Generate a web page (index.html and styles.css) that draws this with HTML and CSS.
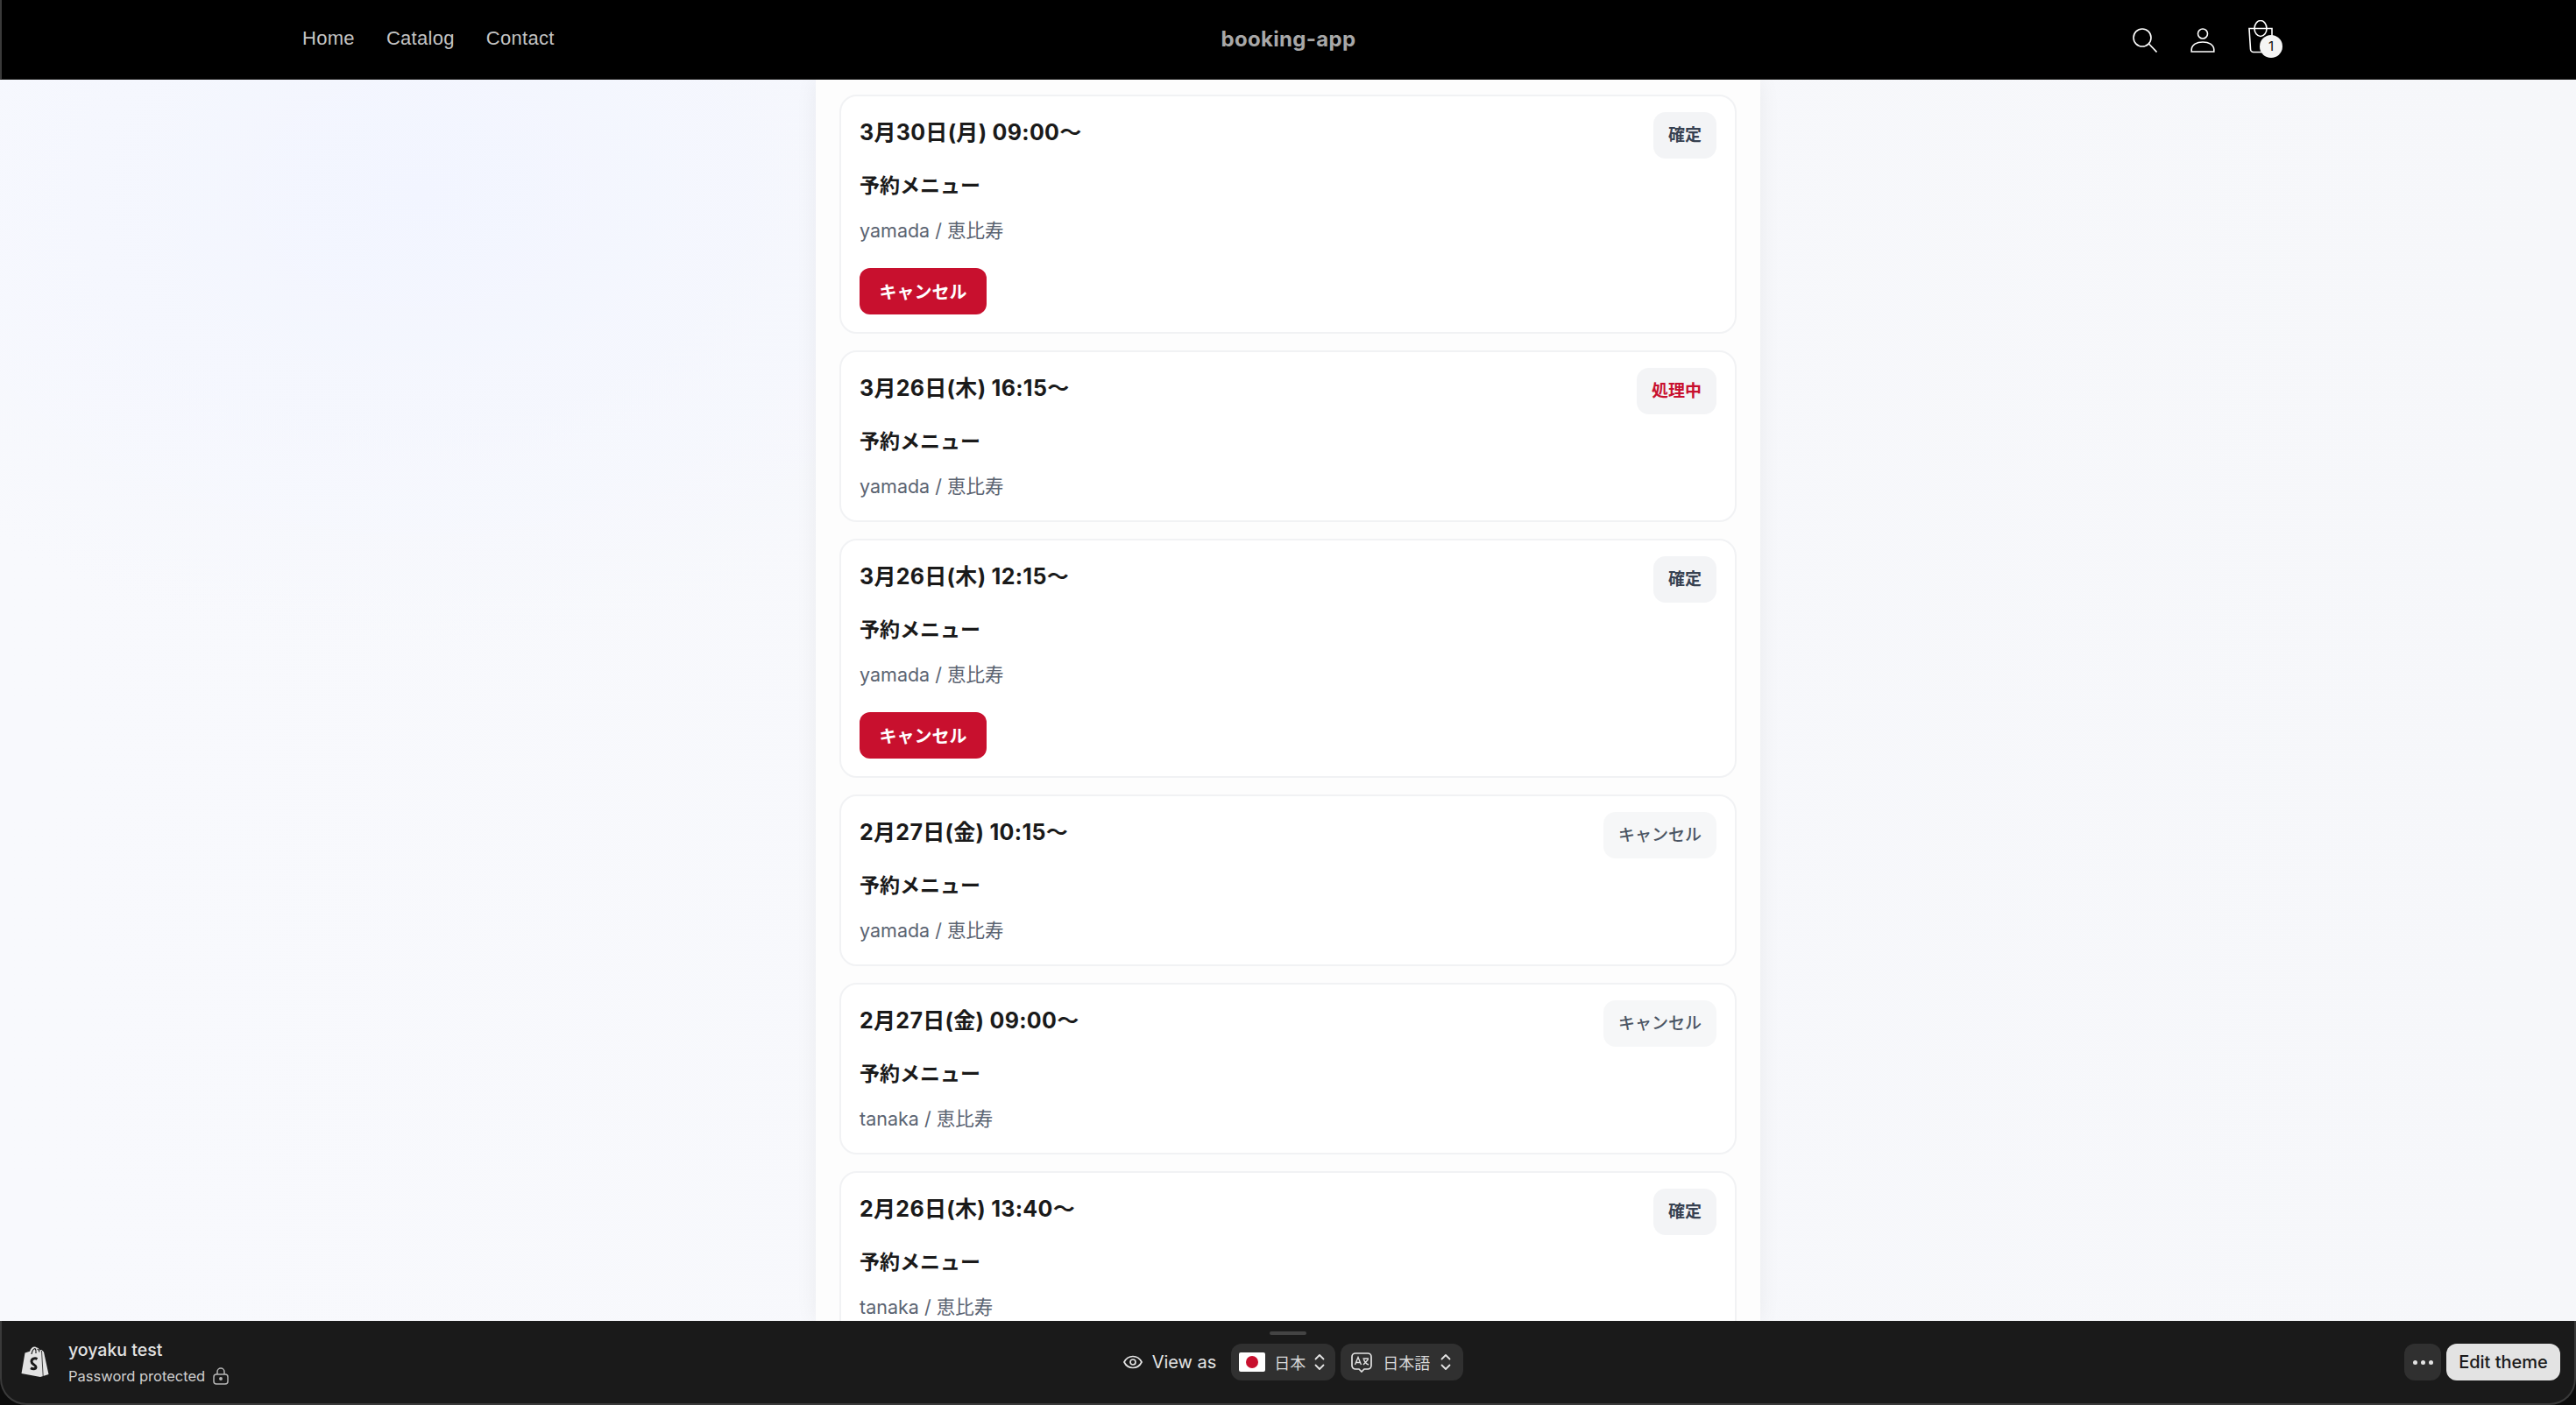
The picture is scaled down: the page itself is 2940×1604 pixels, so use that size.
FILE: index.html
```html
<!DOCTYPE html>
<html lang="ja">
<head>
    <meta charset="UTF-8">
    <meta name="viewport" content="width=device-width, initial-scale=1.0">
    <title>booking-app</title>
    <link rel="stylesheet" href="styles.css">
</head>
<body>
    <header class="site-header">
        <nav class="site-nav">
            <a class="nav-link">Home</a>
            <a class="nav-link">Catalog</a>
            <a class="nav-link">Contact</a>
        </nav>
        <div class="site-name">booking-app</div>
        <div class="header-icons">
            <svg class="icon-search" viewBox="0 0 28 28" fill="none" stroke="#fff" stroke-width="1.6"><circle cx="11" cy="11" r="10"/><path d="M18.5 18l9 9.5"/></svg>
            <svg class="icon-user" viewBox="0 0 28 28" fill="none" stroke="#fff" stroke-width="1.6"><circle cx="14" cy="6.5" r="5.5"/><path d="M1.2 27v-2.5C1.6 19 7 16 14 16s12.400 3 12.800 8.500V27z"/></svg>
            <div class="cart">
                <svg class="icon-cart" viewBox="0 0 28 38" fill="none" stroke="#fff" stroke-width="1.6"><ellipse cx="14" cy="9.500" rx="7" ry="9"/><path d="M1 9.500h26v23.500a3.500 3.500 0 0 1-3.500 3.500H6a3.500 3.500 0 0 1-3.500-3.500z"/></svg>
                <span class="cart-count">1</span>
            </div>
        </div>
    </header>

    <main class="page-body">
        <section class="booking-list">
            <article class="booking-card">
                <div class="card-top">
                    <h2 class="booking-date">3月30日(月) 09:00〜</h2>
                    <span class="status">確定</span>
                </div>
                <p class="booking-menu">予約メニュー</p>
                <p class="booking-staff">yamada / 恵比寿</p>
                <button class="cancel-button">キャンセル</button>
            </article>
            <article class="booking-card">
                <div class="card-top">
                    <h2 class="booking-date">3月26日(木) 16:15〜</h2>
                    <span class="status status-pending">処理中</span>
                </div>
                <p class="booking-menu">予約メニュー</p>
                <p class="booking-staff">yamada / 恵比寿</p>
            </article>
            <article class="booking-card">
                <div class="card-top">
                    <h2 class="booking-date">3月26日(木) 12:15〜</h2>
                    <span class="status">確定</span>
                </div>
                <p class="booking-menu">予約メニュー</p>
                <p class="booking-staff">yamada / 恵比寿</p>
                <button class="cancel-button">キャンセル</button>
            </article>
            <article class="booking-card">
                <div class="card-top">
                    <h2 class="booking-date">2月27日(金) 10:15〜</h2>
                    <span class="status status-cancelled">キャンセル</span>
                </div>
                <p class="booking-menu">予約メニュー</p>
                <p class="booking-staff">yamada / 恵比寿</p>
            </article>
            <article class="booking-card">
                <div class="card-top">
                    <h2 class="booking-date">2月27日(金) 09:00〜</h2>
                    <span class="status status-cancelled">キャンセル</span>
                </div>
                <p class="booking-menu">予約メニュー</p>
                <p class="booking-staff">tanaka / 恵比寿</p>
            </article>
            <article class="booking-card">
                <div class="card-top">
                    <h2 class="booking-date">2月26日(木) 13:40〜</h2>
                    <span class="status">確定</span>
                </div>
                <p class="booking-menu">予約メニュー</p>
                <p class="booking-staff">tanaka / 恵比寿</p>
            </article>
        </section>
    </main>

    <footer class="preview-wrap">
        <div class="preview-bar">
            <span class="drag-handle"></span>
            <div class="store-info">
                <svg class="shop-logo" viewBox="0 0 32 36"><path d="M4.500 7.500L10 5.800C11 2.500 13 .5 15.500.5c1 0 1.800.4 2.400 1.100 1.800.1 2.800 1.500 3.300 3l2.300-.5L26 6.500l5.500 25.500L22 35 .5 31z" fill="#e3e3e3"/><path d="M12 9c.6-3.500 2-6 4-6.500M17 8c.4-2.500 0-4.500-1-5.500M21 6.500c-.2-1.500-.8-3-2.500-3.500" fill="none" stroke="#1a1a1a" stroke-width="1.200"/><path d="M23.500 5l1.700 29" stroke="#1a1a1a" stroke-width=".8"/><path d="M18.500 14.500c-3-1.500-6.500-.2-6.500 3 0 3.500 5 3.500 5 6.300 0 2.400-3.500 2.500-6 1" fill="none" stroke="#1a1a1a" stroke-width="3"/></svg>
                <div class="store-text">
                    <div class="store-name">yoyaku test</div>
                    <div class="store-status">Password protected
                        <svg class="icon-lock" viewBox="0 0 18 20" fill="none" stroke="#b5b5b5" stroke-width="1.500"><path d="M5 8V5a4 4 0 0 1 8 0v3"/><rect x="1" y="8" width="16" height="11" rx="3"/><circle cx="9" cy="13" r="1.200" fill="#b5b5b5"/></svg>
                    </div>
                </div>
            </div>
            <div class="view-as">
                <svg class="icon-eye" viewBox="0 0 22 16" fill="none" stroke="#e3e3e3" stroke-width="1.700"><path d="M1 8c2-4 5.500-6.500 10-6.500S19 4 21 8c-2 4-5.500 6.500-10 6.500S3 12 1 8z"/><circle cx="11" cy="8" r="3"/></svg>
                <span class="view-label">View as</span>
                <div class="picker">
                    <span class="flag"><span class="flag-sun"></span></span>
                    <span class="picker-text">日本</span>
                    <svg class="icon-chevrons" viewBox="0 0 12 20" fill="none" stroke="#e3e3e3" stroke-width="1.800" stroke-linecap="round" stroke-linejoin="round"><path d="M1.500 6.500L6 2l4.500 4.500M1.500 13.500L6 18l4.500-4.500"/></svg>
                </div>
                <div class="picker picker-lang">
                    <svg class="icon-translate" viewBox="0 0 24 24" fill="none" stroke="#e3e3e3" stroke-width="1.700"><path d="M5 2h14a4 4 0 0 1 4 4v10a4 4 0 0 1-4 4h-4l-3 3-3-3H5a4 4 0 0 1-4-4V6a4 4 0 0 1 4-4z"/><path d="M4.500 15L8 6.500l3.500 8.500M5.700 12.500h4.600M13.500 8h6.500M14 15l5.500-6M14.500 9c.8 2.500 2.800 5 5.500 6" stroke-width="1.400"/></svg>
                    <span class="picker-text">日本語</span>
                    <svg class="icon-chevrons" viewBox="0 0 12 20" fill="none" stroke="#e3e3e3" stroke-width="1.800" stroke-linecap="round" stroke-linejoin="round"><path d="M1.500 6.500L6 2l4.500 4.500M1.500 13.500L6 18l4.500-4.500"/></svg>
                </div>
            </div>
            <div class="bar-actions">
                <button class="more-button"><span class="dot"></span><span class="dot"></span><span class="dot"></span></button>
                <button class="edit-button">Edit theme</button>
            </div>
        </div>
    </footer>
</body>
</html>
```

FILE: styles.css
```css
* {
    box-sizing: border-box;
}

html, body {
    margin: 0;
    height: 100%;
}

body {
    display: flex;
    flex-direction: column;
    height: 1604px;
    overflow: hidden;
    font-family: Inter, "Noto Sans CJK JP", sans-serif;
    background-color: #f7f8fb;
    background-image:
        radial-gradient(ellipse 760px 520px at 480px 220px, #f2f5ff 0%, rgba(242, 245, 255, 0) 100%),
        linear-gradient(90deg, #f8f9fd 0%, #f6f7fa 100%);
}

.site-header {
    flex: 0 0 91px;
    display: grid;
    grid-template-columns: 1fr auto 1fr;
    align-items: center;
    padding: 0 344px 2px 343px;
    background-color: #000;
    border-left: 2px solid #3a3a3a;
    border-bottom: 1px solid #222;
}

.site-nav {
    display: flex;
    gap: 36px;
}

.nav-link {
    font-family: "Liberation Sans", Arial, sans-serif;
    font-size: 22px;
    letter-spacing: 0.3px;
    color: #c4c4c4;
}

.site-name {
    font-family: Inter, sans-serif;
    font-size: 24px;
    font-weight: 700;
    letter-spacing: 0.3px;
    color: #a8a8a8;
}

.header-icons {
    display: flex;
    justify-content: flex-end;
    align-items: flex-end;
    gap: 38px;
    height: 38px;
    margin-bottom: 5px;
    padding-right: 2px;
}

.icon-search,
.icon-user {
    width: 28px;
    height: 28px;
    margin-bottom: 1px;
}

.cart {
    position: relative;
    width: 28px;
    height: 38px;
}

.icon-cart {
    display: block;
    width: 28px;
    height: 38px;
}

.cart-count {
    position: absolute;
    left: 13px;
    top: 17px;
    width: 26px;
    height: 26px;
    border-radius: 50%;
    background-color: #f5f5f5;
    color: #111;
    font-size: 15px;
    line-height: 26px;
    text-align: center;
}

.page-body {
    flex: 1;
    min-height: 0;
    overflow: hidden;
}

.booking-list {
    display: flex;
    flex-direction: column;
    gap: 19px;
    width: 1078px;
    height: 100%;
    margin: 0 auto;
    padding: 17px 27px 0;
    background-color: #fdfdfd;
    box-shadow: 0 0 24px rgba(0, 0, 0, 0.06);
}

.booking-card {
    flex: none;
    padding: 18px 21px 20px;
    background-color: #fff;
    border: 2px solid #f1f2f4;
    border-radius: 20px;
}

.card-top {
    display: flex;
    justify-content: space-between;
    align-items: flex-start;
    height: 53px;
}

.booking-date {
    margin: 0;
    font-size: 25px;
    font-weight: 700;
    letter-spacing: 0.3px;
    line-height: 47px;
    color: #1a1a1a;
}

.status {
    height: 53px;
    padding: 0 17px;
    border-radius: 14px;
    background-color: #f3f4f6;
    color: #374151;
    font-size: 19px;
    font-weight: 700;
    line-height: 54px;
}

.status-pending {
    color: #c8102e;
}

.status-cancelled {
    font-weight: 500;
    color: #4b5563;
    background-color: #f6f7f8;
}

.booking-menu {
    margin: 14px 0 0;
    font-size: 23px;
    font-weight: 700;
    line-height: 34px;
    color: #1a1a1a;
}

.booking-staff {
    margin: 15px 0 0;
    font-size: 21.5px;
    line-height: 38px;
    color: #5b6472;
}

.cancel-button {
    display: block;
    width: 145px;
    height: 53px;
    margin-top: 24px;
    border: none;
    border-radius: 12px;
    background-color: #c8102e;
    color: #fff;
    font-family: inherit;
    font-size: 20px;
    font-weight: 700;
}

.preview-wrap {
    flex: 0 0 96px;
    background-color: #0c0c0c;
}

.preview-bar {
    position: relative;
    display: grid;
    grid-template-columns: 1fr auto 1fr;
    align-items: center;
    height: 100%;
    padding: 0 16px 0 28px;
    background-color: #1a1a1a;
    border: 2px solid #3a3a3a;
    border-top: none;
    border-radius: 0 0 30px 30px;
}

.drag-handle {
    position: absolute;
    left: 1447px;
    top: 12px;
    width: 42px;
    height: 4px;
    border-radius: 2px;
    background-color: #444;
}

.store-info {
    display: flex;
    align-items: center;
    gap: 22px;
    margin-left: -6px;
}

.shop-logo {
    width: 32px;
    height: 36px;
}

.store-name {
    font-size: 19.5px;
    font-weight: 500;
    line-height: 28px;
    color: #e3e3e3;
}

.store-status {
    display: flex;
    align-items: center;
    gap: 9px;
    margin-top: 4px;
    font-size: 16.5px;
    line-height: 24px;
    color: #d0d0d0;
}

.icon-lock {
    width: 18px;
    height: 20px;
}

.view-as {
    display: flex;
    align-items: center;
    gap: 6px;
}

.icon-eye {
    width: 22px;
    height: 16px;
    margin-right: 5px;
}

.view-label {
    margin-right: 11px;
    font-size: 20px;
    color: #e3e3e3;
}

.picker {
    display: flex;
    align-items: center;
    gap: 10px;
    height: 42px;
    padding: 0 12px 0 9px;
    border-radius: 12px;
    background-color: #303030;
}

.picker-lang {
    padding: 0 14px 0 12px;
    gap: 12px;
}

.flag {
    display: flex;
    align-items: center;
    justify-content: center;
    width: 30px;
    height: 22px;
    border-radius: 2px;
    background-color: #fff;
}

.flag-sun {
    width: 14px;
    height: 14px;
    border-radius: 50%;
    background-color: #c8102e;
}

.picker-text {
    font-size: 18px;
    color: #d8d8d8;
}

.icon-chevrons {
    width: 12px;
    height: 20px;
}

.icon-translate {
    width: 24px;
    height: 24px;
}

.bar-actions {
    display: flex;
    justify-content: flex-end;
    gap: 6px;
}

.more-button {
    display: flex;
    align-items: center;
    justify-content: center;
    gap: 4px;
    width: 42px;
    height: 42px;
    padding: 0;
    border: none;
    border-radius: 12px;
    background-color: #303030;
}

.dot {
    width: 5px;
    height: 5px;
    border-radius: 50%;
    background-color: #e3e3e3;
}

.edit-button {
    width: 130px;
    height: 42px;
    padding: 0;
    border: none;
    border-radius: 12px;
    background-color: #e3e3e3;
    color: #1a1a1a;
    font-family: inherit;
    font-size: 20px;
    font-weight: 500;
}
```
